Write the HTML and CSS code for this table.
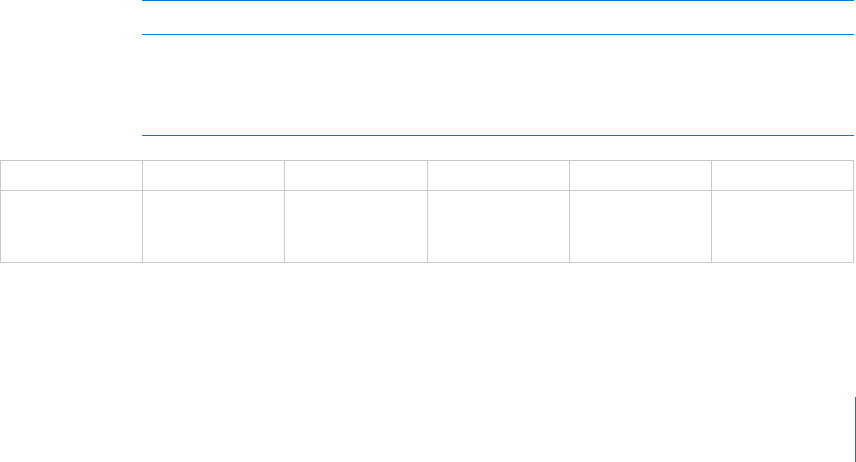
FILE: index.html
```html
<!DOCTYPE html>
<html lang="en">
<head>
<meta charset="utf-8">
<title>Layout</title>
<link rel="stylesheet" href="styles.css">
</head>
<body>
<div class="header">
  <div class="rule rule-bright"></div>
  <div class="rule rule-bright rule-second"></div>
  <div class="rule rule-dark rule-third"></div>
</div>
<div class="grid">
  <div class="cell head"></div>
  <div class="cell head"></div>
  <div class="cell head"></div>
  <div class="cell head"></div>
  <div class="cell head"></div>
  <div class="cell head"></div>
  <div class="cell body-cell"></div>
  <div class="cell body-cell"></div>
  <div class="cell body-cell"></div>
  <div class="cell body-cell"></div>
  <div class="cell body-cell"></div>
  <div class="cell body-cell"></div>
</div>
<div class="edge"></div>
</body>
</html>
```
FILE: styles.css
```css
html, body {
  margin: 0;
  padding: 0;
  background: #ffffff;
  font-family: "Liberation Sans", Arial, sans-serif;
}
body {
  width: 856px;
  height: 462px;
  overflow: hidden;
}
.header {
  margin-left: 142px;
  width: 712px;
}
.rule {
  height: 1px;
}
.rule-bright {
  background: #0c79d1;
}
.rule-dark {
  background: #2d6fb3;
}
.rule-second {
  margin-top: 33px;
}
.rule-third {
  margin-top: 100px;
}
.grid {
  margin-top: 24px;
  width: 853px;
  display: grid;
  grid-template-columns: 142px 142px 143px 142px 142px 142px;
  grid-template-rows: 30px 72px;
  border-right: 1px solid #c8c8c8;
  border-bottom: 1px solid #c8c8c8;
}
.cell {
  box-sizing: border-box;
  border-left: 1px solid #c8c8c8;
  border-top: 1px solid #c8c8c8;
}
.edge {
  margin-top: 134px;
  margin-left: 855px;
  width: 1px;
  height: 65px;
  background: #2d6fb3;
}
```
